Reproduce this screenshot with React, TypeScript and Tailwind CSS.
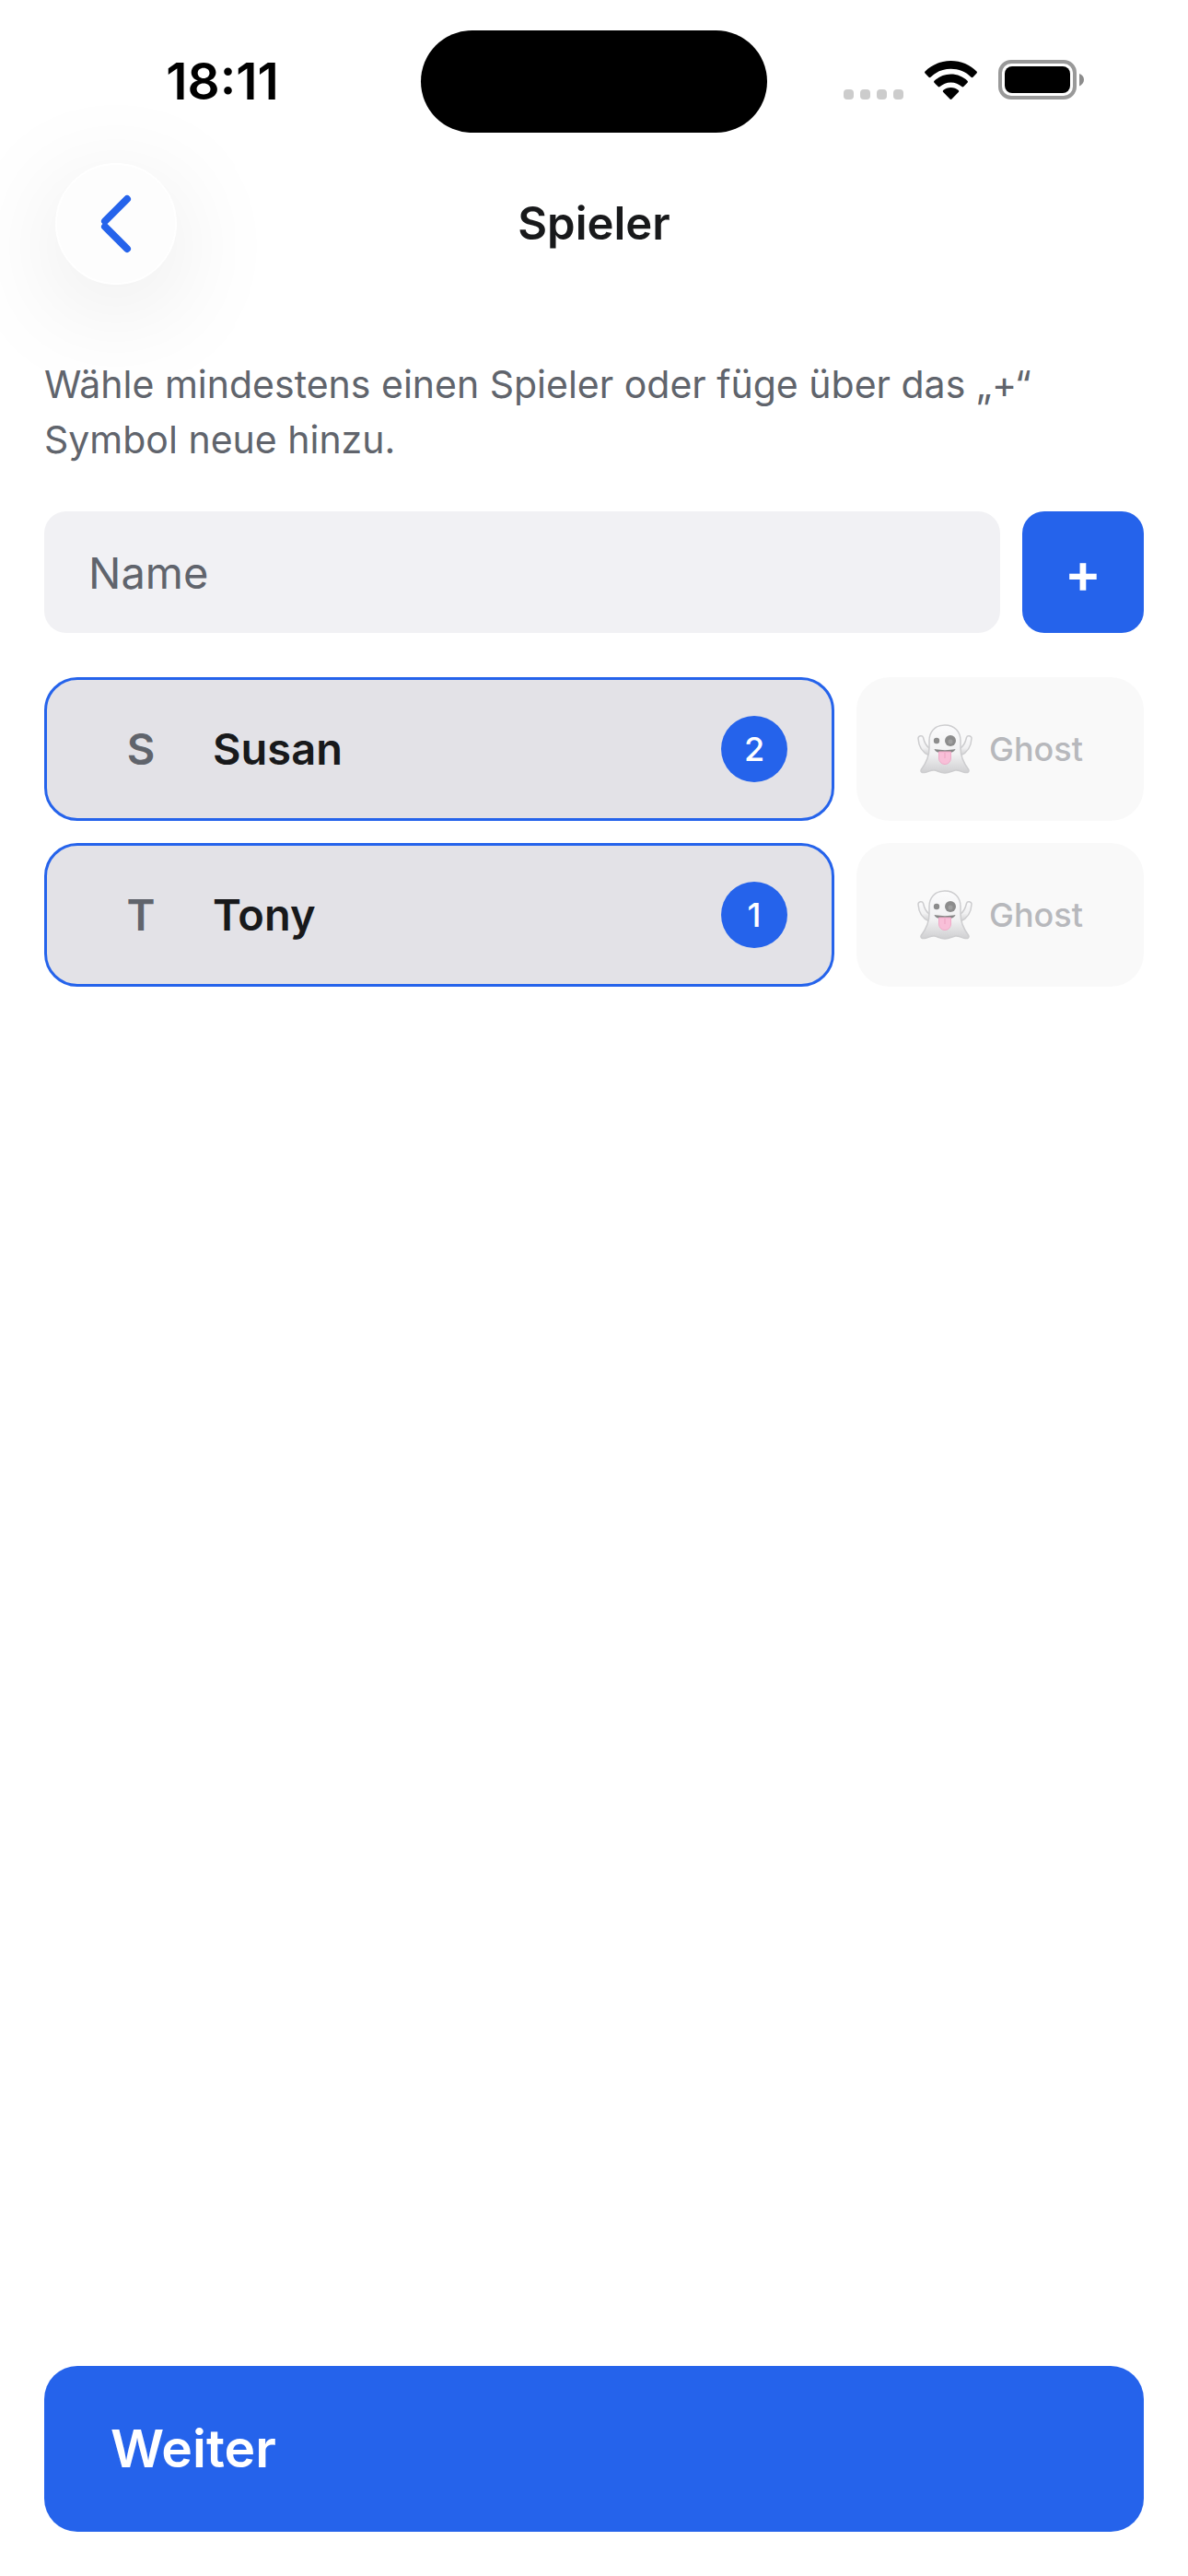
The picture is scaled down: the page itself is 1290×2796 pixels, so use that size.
import React from "react";

type Player = {name: string; order: number};

const players: Player[] = [
  {name: "Susan", order: 2},
  {name: "Tony", order: 1},
];

const WifiIcon = () => {
  return (
    <svg width="57" height="42" viewBox="0 0 57 42">
      <path d="M28.500 0C17.500 0 7.500 4.300.5 11.500c-.6.600-.6 1.400 0 2l4 4.200c.6.600 1.400.6 2 0C12.300 12 20 8.800 28.500 8.800S44.700 12 50.500 17.700c.6.600 1.400.6 2 0l4-4.200c.6-.6.6-1.400 0-2C49.500 4.300 39.500 0 28.500 0z" />
      <path d="M28.500 14.600c-7 0-13.300 2.700-18 7.200-.6.600-.6 1.400 0 2l4.200 4.300c.6.600 1.300.6 1.900 0 3.200-2.900 7.400-4.700 11.900-4.700s8.700 1.800 11.900 4.700c.6.600 1.300.6 1.900 0l4.200-4.300c.6-.6.6-1.400 0-2-4.700-4.500-11-7.200-18-7.200z" />
      <path d="M28.500 29c-3.200 0-6 1.100-8.300 3-.6.600-.6 1.400 0 2l7.300 7.500c.6.600 1.400.6 2 0l7.300-7.500c.6-.6.6-1.400 0-2-2.300-1.900-5.100-3-8.300-3z" />
    </svg>
  );
};

const BatteryIcon = () => {
  return (
    <svg width="93" height="43" viewBox="0 0 93 43" fill="none">
      <rect x="2" y="2" width="81" height="39" rx="12" stroke="#999" strokeWidth="4" />
      <rect x="7" y="7" width="71" height="29" rx="8" fill="#000" />
      <path d="M88 15c3 1 5 3.500 5 6.500S91 27 88 28.500z" fill="#8c8c8c" />
    </svg>
  );
};

const GhostIcon = () => {
  return (
    <svg width="60" height="54" viewBox="0 0 60 54" fill="none">
      <defs>
        <linearGradient id="ghost-body" x1="0" y1="0" x2="0" y2="1">
          <stop offset="0" stopColor="#fbfbfc" />
          <stop offset="0.6" stopColor="#f1f1f2" />
          <stop offset="1" stopColor="#cfcfd1" />
        </linearGradient>
      </defs>
      <g fill="url(#ghost-body)" stroke="#cdcdcf" strokeWidth="1.500">
        <path d="M13 34C6 31 1.500 24 1 15.500 1 12.500 5.500 11.500 6.500 14.500 7.500 19 9 23 13 26z" />
        <path d="M47 34c7-3 11.500-10 12-18.500 0-3-4.500-4-5.500-1C52.500 19 51 23 47 26z" />
        <path d="M30 1C19 1 13 8.500 13 18v8c0 9-4 17-8.500 23-1.500 2.500.5 4 3.500 3.500 4-.5 7-3 10.500-2.500S25 53 30 53s8-2.500 11.500-3S48 52 52 52.500c3 .5 5-1 3.500-3.500C51 43 47 35 47 26v-8C47 8.500 41 1 30 1z" />
      </g>
      <circle cx="21" cy="18" r="3.200" fill="#8c8c8c" />
      <circle cx="36" cy="18" r="6" fill="#8c8c8c" />
      <circle cx="36" cy="19" r="2.500" fill="#a0a0a0" />
      <path d="M18.500 27c6 1.500 17 1.500 23 0-1 3-5 4.500-11.500 4.500S19.500 30 18.500 27z" fill="#858585" />
      <path d="M23.500 30h13v7a6.500 6.500 0 0 1-13 0z" fill="#f8bfd8" stroke="#f0aac8" />
      <path d="M30 31v6" stroke="#eda3c2" />
    </svg>
  );
};

const StatusBar = () => {
  return (
    <div className="h-[177px] grid grid-cols-[1fr_376px_1fr] items-start pt-[33px]">
      <div className="h-[111px] flex items-center justify-center pl-[26px] text-[55px] font-semibold text-black">
        18:11
      </div>
      <div className="h-[111px] rounded-full bg-black" />
      <div className="h-[107px] flex items-center justify-end gap-[23px] pr-[113px]">
        <div className="h-[42px] flex items-end gap-[7px]">
          <span className="size-[11px] rounded-[4px] bg-[#ccc]" />
          <span className="size-[11px] rounded-[4px] bg-[#ccc]" />
          <span className="size-[11px] rounded-[4px] bg-[#ccc]" />
          <span className="size-[11px] rounded-[4px] bg-[#ccc]" />
        </div>
        <WifiIcon />
        <BatteryIcon />
      </div>
    </div>
  );
};

const Header = () => {
  return (
    <header className="grid grid-cols-[1fr_auto_1fr] items-center px-[60px]">
      <button
        aria-label="Zurück"
        className="size-[132px] rounded-full border-2 border-white bg-[#fdfdfd] shadow-[0_24px_120px_rgba(0,0,0,0.1)] flex items-center justify-center"
      >
        <svg width="34" height="64" viewBox="0 0 34 64" fill="none">
          <path d="M29 5L5 29M5 35l24 24" stroke="#2563eb" strokeWidth="8" strokeLinecap="round" />
        </svg>
      </button>
      <h1 className="text-[49px] font-semibold">Spieler</h1>
    </header>
  );
};

const PlayerRow = ({player}: {player: Player}) => {
  return (
    <li className="flex gap-6">
      <button className="h-[156px] flex-1 flex items-center rounded-[36px] border-3 border-[#2563eb] bg-[#e3e2e7] pl-[60px] pr-12 text-[47px] font-semibold">
        <span className="w-[84px] text-center text-[#60646c]">{player.name[0]}</span>
        <span className="pl-[36px]">{player.name}</span>
        <span className="ml-auto size-[72px] rounded-full bg-[#2563eb] flex items-center justify-center text-[36px] font-medium text-white">
          {player.order}
        </span>
      </button>
      <button className="w-[312px] flex items-center justify-center gap-[18px] rounded-[36px] bg-[#f9f9f9] text-[36px] font-medium text-[#b7b8bc]">
        <GhostIcon />
        Ghost
      </button>
    </li>
  );
};

const App = () => {
  return (
    <div className="min-h-screen flex flex-col bg-white font-['Inter',sans-serif] text-[#18191b]">
      <StatusBar />
      <Header />
      <main className="flex-1 flex flex-col px-12 pt-[78px] pb-12">
        <p className="text-[41px] leading-[60px] text-[#60646c]">
          Wähle mindestens einen Spieler oder füge über das „+“ Symbol neue hinzu.
        </p>
        <form className="flex gap-6 pt-12">
          <input
            type="text"
            aria-label="Name"
            placeholder="Name"
            className="h-[132px] min-w-0 flex-1 rounded-[24px] bg-[#f1f1f4] px-12 text-[47px] placeholder:text-[#60646c] outline-none"
          />
          <button
            type="button"
            aria-label="Spieler hinzufügen"
            className="size-[132px] rounded-[24px] bg-[#2563eb] text-[60px] font-semibold text-white"
          >
            +
          </button>
        </form>
        <ul className="flex flex-col gap-6 pt-12">
          {players.map((player) => (
            <PlayerRow key={player.name} player={player} />
          ))}
        </ul>
        <button className="mt-auto h-[180px] w-full rounded-[36px] bg-[#2563eb] px-[72px] text-left text-[57px] font-semibold text-white">
          Weiter
        </button>
      </main>
    </div>
  );
};

export default App;
